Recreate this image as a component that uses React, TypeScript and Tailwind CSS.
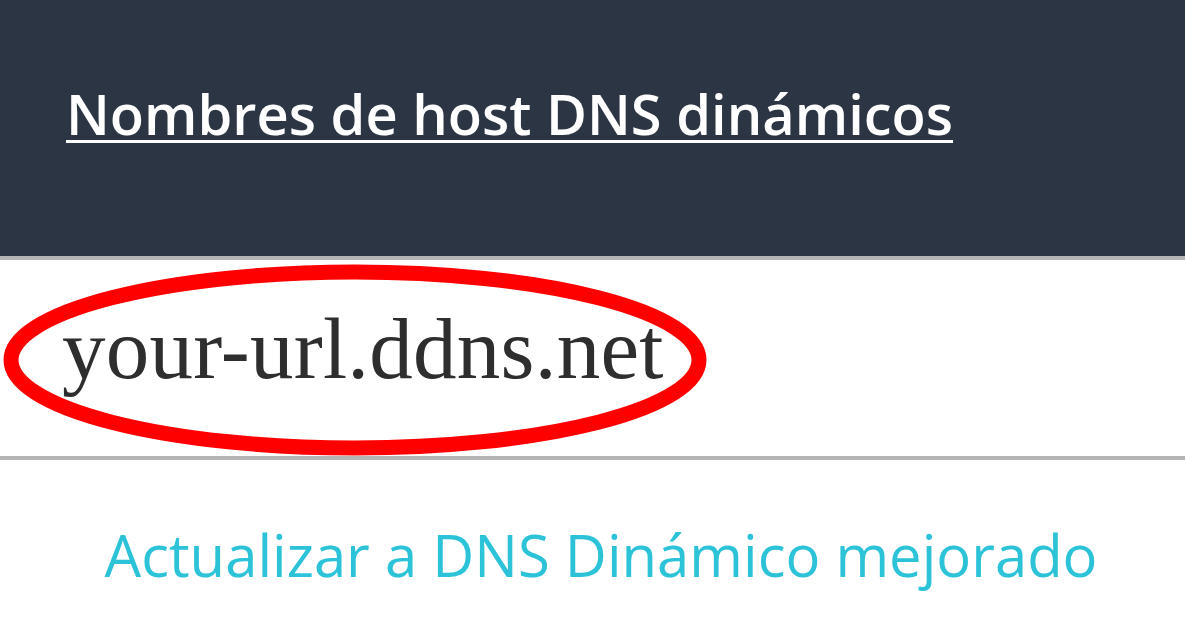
export default function App() {
  return (
    <div className="w-[1185px] h-[635px] bg-white overflow-hidden">
      {/* Header */}
      <div className="h-[256px] bg-[#2c3543] pl-[66px] pt-[75px]">
        <a
          href="#"
          className="text-[56px] leading-[76px] font-semibold text-white underline decoration-[3px] underline-offset-[5px]"
          style={{ fontFamily: '"Open Sans", sans-serif' }}
        >
          Nombres de host DNS dinámicos
        </a>
      </div>

      {/* Hostname row */}
      <div className="relative h-[204px] border-y-4 border-[#b4b4b4] pl-[62px] pt-[41px]">
        <div
          className="text-[87px] leading-[96px] text-[#2e2e2e] tracking-[0.25px]"
          style={{ fontFamily: '"Liberation Serif", serif' }}
        >
          your-url.ddns.net
        </div>
        {/* red annotation ring */}
        <svg
          className="absolute left-0 top-[-4px] pointer-events-none"
          width="720"
          height="204"
          viewBox="0 0 720 204"
        >
          <ellipse cx="355" cy="104" rx="344" ry="88" fill="none" stroke="#ff0000" strokeWidth="15" />
        </svg>
      </div>

      {/* Upgrade link */}
      <div className="pt-[57px] text-center pl-[17px]">
        <a
          href="#"
          className="text-[58px] leading-[76px] text-[#2cc3d8]"
          style={{ fontFamily: '"Open Sans", sans-serif' }}
        >
          Actualizar a DNS Dinámico mejorado
        </a>
      </div>
    </div>
  );
}
